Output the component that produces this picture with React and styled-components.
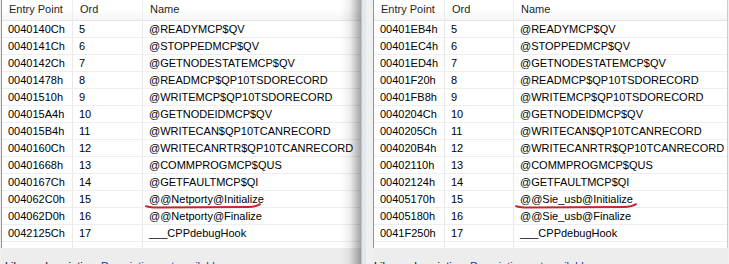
import React from "react";
import styled, { createGlobalStyle } from "styled-components";

const Global = createGlobalStyle`
  html, body { margin: 0; padding: 0; background: #f0f0f0; }
  body { overflow: hidden; font-family: "Liberation Sans", Arial, sans-serif; }
`;

const Page = styled.div`
  display: flex;
  width: 729px;
  height: 264px;
  overflow: hidden;
  background: #f0f0f0;
`;

const Pane = styled.div`
  position: relative;
  display: flex;
  flex-direction: column;
  flex: ${(p) => (p.$width ? `0 0 ${p.$width}px` : "1 1 auto")};
  min-width: 0;
  padding-left: ${(p) => p.$padLeft}px;
  padding-right: ${(p) => p.$padRight}px;
  background: #f0f0f0;
  ${(p) =>
    p.$shadow &&
    `
    &::after {
      content: "";
      position: absolute;
      top: 0;
      right: 0;
      bottom: 0;
      width: 20px;
      background: linear-gradient(to right, rgba(0,0,0,0) 0%, rgba(0,0,0,0.07) 45%, rgba(0,0,0,0.36) 100%);
      pointer-events: none;
    }
  `}
`;

const Frame = styled.div`
  flex: 0 0 5px;
  background: linear-gradient(to right, #9fb3c9 0px, #d4e1ee 1px, #e4ecf5 3px, #d9e2ec 5px);
`;

const ListView = styled.div`
  display: flex;
  flex-direction: column;
  height: 248px;
  background: #fff;
  border-left: 1px solid #8e939a;
  border-right: ${(p) => (p.$borderRight ? "1px solid #c9ccd1" : "none")};
  overflow: hidden;
  flex: 0 0 auto;
`;

const Grid = styled.div`
  display: grid;
  grid-template-columns: ${(p) => `${p.$c1}px ${p.$c2}px 1fr`};
`;

const HeaderRow = styled(Grid)`
  height: 20px;
  border-bottom: 1px solid #e3e5e8;
  background: linear-gradient(to bottom, #ffffff 0%, #ffffff 45%, #f4f5f6 100%);
`;

const HeaderCell = styled.div`
  padding-left: 7px;
  line-height: 18px;
  font-size: 11px;
  color: #1f1f1f;
  white-space: nowrap;
  border-right: 1px solid ${(p) => (p.$last ? "transparent" : "#eceef1")};
`;

const Row = styled(Grid)`
  height: 16px;
  border-bottom: 1px solid #eeeeee;
`;

const Filler = styled(Grid)`
  flex: 1 1 auto;
`;

const Cell = styled.div`
  position: relative;
  padding-left: ${(p) => p.$pad}px;
  line-height: 16px;
  font-size: 11px;
  color: #000;
  white-space: nowrap;
  border-right: 1px solid ${(p) => (p.$last ? "transparent" : "#e9e9e9")};
`;

const Mark = styled.svg`
  position: absolute;
  left: ${(p) => p.$left}px;
  top: 12px;
  overflow: visible;
  pointer-events: none;
`;

const StatusBar = styled.div`
  flex: 1 1 auto;
  padding-top: 10px;
  padding-left: ${(p) => p.$pad}px;
  font-size: 11px;
  line-height: 16px;
  white-space: nowrap;
  color: #000;
  background: #ededed;
`;

const StatusValue = styled.span`
  color: #0d3aa6;
`;

const leftRows = [
  ["0040140Ch", "5", "@READYMCP$QV"],
  ["0040141Ch", "6", "@STOPPEDMCP$QV"],
  ["0040142Ch", "7", "@GETNODESTATEMCP$QV"],
  ["00401478h", "8", "@READMCP$QP10TSDORECORD"],
  ["00401510h", "9", "@WRITEMCP$QP10TSDORECORD"],
  ["004015A4h", "10", "@GETNODEIDMCP$QV"],
  ["004015B4h", "11", "@WRITECAN$QP10TCANRECORD"],
  ["0040160Ch", "12", "@WRITECANRTR$QP10TCANRECORD"],
  ["00401668h", "13", "@COMMPROGMCP$QUS"],
  ["0040167Ch", "14", "@GETFAULTMCP$QI"],
  ["004062C0h", "15", "@@Netporty@Initialize"],
  ["004062D0h", "16", "@@Netporty@Finalize"],
  ["0042125Ch", "17", "___CPPdebugHook"],
];

const rightRows = [
  ["00401EB4h", "5", "@READYMCP$QV"],
  ["00401EC4h", "6", "@STOPPEDMCP$QV"],
  ["00401ED4h", "7", "@GETNODESTATEMCP$QV"],
  ["00401F20h", "8", "@READMCP$QP10TSDORECORD"],
  ["00401FB8h", "9", "@WRITEMCP$QP10TSDORECORD"],
  ["0040204Ch", "10", "@GETNODEIDMCP$QV"],
  ["0040205Ch", "11", "@WRITECAN$QP10TCANRECORD"],
  ["004020B4h", "12", "@WRITECANRTR$QP10TCANRECORD"],
  ["00402110h", "13", "@COMMPROGMCP$QUS"],
  ["00402124h", "14", "@GETFAULTMCP$QI"],
  ["00405170h", "15", "@@Sie_usb@Initialize"],
  ["00405180h", "16", "@@Sie_usb@Finalize"],
  ["0041F250h", "17", "___CPPdebugHook"],
];

function Underline({ left, width }) {
  const w = width;
  return (
    <Mark $left={left} width={w} height={6} viewBox={`0 0 ${w} 6`}>
      <path
        d={`M0 3.2 Q3 4.6 10 4.4 L${w - 12} 4 Q${w - 4} 3.8 ${w} 1.2`}
        fill="none"
        stroke="#c3262c"
        strokeWidth="2"
        strokeLinecap="round"
      />
    </Mark>
  );
}

function Table({ rows, c1, c2, mark, borderRight }) {
  return (
    <ListView $borderRight={borderRight}>
      <HeaderRow $c1={c1} $c2={c2}>
        <HeaderCell>Entry Point</HeaderCell>
        <HeaderCell>Ord</HeaderCell>
        <HeaderCell $last>Name</HeaderCell>
      </HeaderRow>
      {rows.map(([ep, ord, name]) => (
        <Row key={ep} $c1={c1} $c2={c2}>
          <Cell $pad={6}>{ep}</Cell>
          <Cell $pad={6}>{ord}</Cell>
          <Cell $pad={6} $last>
            {name}
            {ord === "15" && <Underline left={mark.left} width={mark.width} />}
          </Cell>
        </Row>
      ))}
      <Filler $c1={c1} $c2={c2}>
        <Cell $pad={6} />
        <Cell $pad={6} />
        <Cell $pad={6} $last />
      </Filler>
    </ListView>
  );
}

export default function App() {
  return (
    <Page>
      <Global />
      <Pane $width={360} $padLeft={1} $padRight={0} $shadow>
        <Table rows={leftRows} c1={71} c2={70} mark={{ left: 3, width: 114 }} />
        <StatusBar $pad={4}>
          Library description: <StatusValue>Description not available</StatusValue>
        </StatusBar>
      </Pane>
      <Frame />
      <Pane $padLeft={7} $padRight={1}>
        <Table rows={rightRows} c1={71} c2={69} mark={{ left: 2, width: 120 }} borderRight />
        <StatusBar $pad={1}>
          Library description: <StatusValue>Description not available</StatusValue>
        </StatusBar>
      </Pane>
    </Page>
  );
}
